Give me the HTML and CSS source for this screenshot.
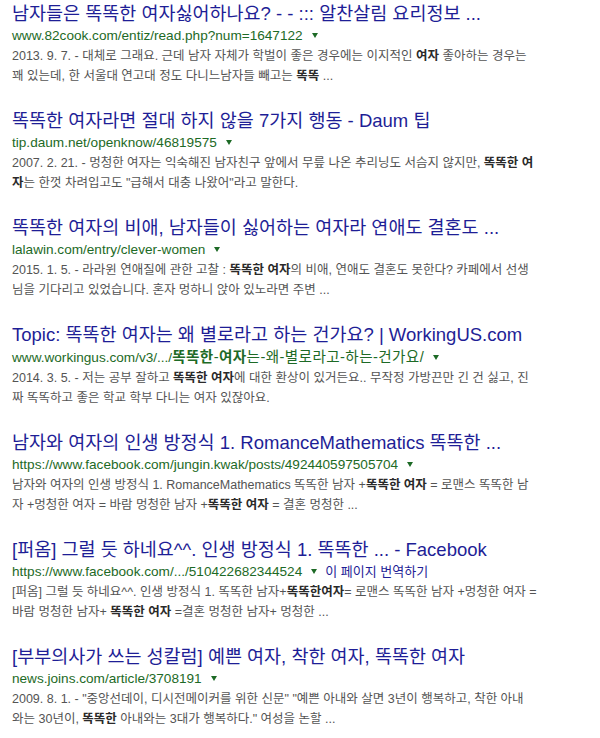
FILE: index.html
```html
<!DOCTYPE html>
<html lang="ko">
<head>
<meta charset="utf-8">
<link rel="stylesheet" href="styles.css">
</head>
<body>
<div class="results">
  <div class="result">
    <a class="title">남자들은 똑똑한 여자싫어하나요? - - ::: 알찬살림 요리정보 ...</a>
    <div class="url">www.82cook.com/entiz/read.php?num=1647122<span class="arrow"></span></div>
    <div class="snippet">2013. 9. 7. - 대체로 그래요. 근데 남자 자체가 학벌이 좋은 경우에는 이지적인 <b>여자</b> 좋아하는 경우는<br>꽤 있는데, 한 서울대 연고대 정도 다니느남자들 빼고는 <b>똑똑</b> ...</div>
  </div>
  <div class="result">
    <a class="title">똑똑한 여자라면 절대 하지 않을 7가지 행동 - Daum 팁</a>
    <div class="url">tip.daum.net/openknow/46819575<span class="arrow"></span></div>
    <div class="snippet">2007. 2. 21. - 멍청한 여자는 익숙해진 남자친구 앞에서 무릎 나온 추리닝도 서슴지 않지만, <b>똑똑한 여</b><br><b>자</b>는 한껏 차려입고도 "급해서 대충 나왔어"라고 말한다.</div>
  </div>
  <div class="result">
    <a class="title">똑똑한 여자의 비애, 남자들이 싫어하는 여자라 연애도 결혼도 ...</a>
    <div class="url">lalawin.com/entry/clever-women<span class="arrow"></span></div>
    <div class="snippet">2015. 1. 5. - 라라윈 연애질에 관한 고찰 : <b>똑똑한 여자</b>의 비애, 연애도 결혼도 못한다? 카페에서 선생<br>님을 기다리고 있었습니다. 혼자 멍하니 앉아 있노라면 주변 ...</div>
  </div>
  <div class="result">
    <a class="title">Topic: 똑똑한 여자는 왜 별로라고 하는 건가요? | WorkingUS.com</a>
    <div class="url">www.workingus.com/v3/.../<span class="ko"><b>똑똑한</b>-<b>여자</b>는-왜-별로라고-하는-건가요/</span><span class="arrow"></span></div>
    <div class="snippet">2014. 3. 5. - 저는 공부 잘하고 <b>똑똑한 여자</b>에 대한 환상이 있거든요.. 무작정 가방끈만 긴 건 싫고, 진<br>짜 똑똑하고 좋은 학교 학부 다니는 여자 있잖아요.</div>
  </div>
  <div class="result">
    <a class="title">남자와 여자의 인생 방정식 1. RomanceMathematics 똑똑한 ...</a>
    <div class="url">https://www.facebook.com/jungin.kwak/posts/492440597505704<span class="arrow"></span></div>
    <div class="snippet">남자와 여자의 인생 방정식 1. RomanceMathematics 똑똑한 남자 +<b>똑똑한 여자</b> = 로맨스 똑똑한 남<br>자 +멍청한 여자 = 바람 멍청한 남자 +<b>똑똑한 여자</b> = 결혼 멍청한 ...</div>
  </div>
  <div class="result">
    <a class="title">[퍼옴] 그럴 듯 하네요^^. 인생 방정식 1. 똑똑한 ... - Facebook</a>
    <div class="url">https://www.facebook.com/.../510422682344524<span class="arrow"></span><a class="translate">이 페이지 번역하기</a></div>
    <div class="snippet">[퍼옴] 그럴 듯 하네요^^. 인생 방정식 1. 똑똑한 남자+<b>똑똑한여자</b>= 로맨스 똑똑한 남자 +멍청한 여자 =<br>바람 멍청한 남자+ <b>똑똑한 여자</b> =결혼 멍청한 남자+ 멍청한 ...</div>
  </div>
  <div class="result">
    <a class="title">[부부의사가 쓰는 성칼럼] 예쁜 여자, 착한 여자, 똑똑한 여자</a>
    <div class="url">news.joins.com/article/3708191<span class="arrow"></span></div>
    <div class="snippet">2009. 8. 1. - "중앙선데이, 디시전메이커를 위한 신문" "예쁜 아내와 살면 3년이 행복하고, 착한 아내<br>와는 30년이, <b>똑똑한</b> 아내와는 3대가 행복하다." 여성을 논할 ...</div>
  </div>
</div>
</body>
</html>
```

FILE: styles.css
```css
html, body {
  margin: 0;
  padding: 0;
  background: #ffffff;
}

body {
  font-family: "Liberation Sans", "Noto Sans CJK KR", sans-serif;
  width: 600px;
  height: 738px;
  overflow: hidden;
}

.results {
  display: flex;
  flex-direction: column;
  gap: 23px;
  padding: 2px 0 0 12px;
}

.result {
  display: flex;
  flex-direction: column;
}

.title {
  display: block;
  font-size: 18.5px;
  line-height: 24px;
  color: #1e1e96;
  white-space: nowrap;
  text-decoration: none;
}

.url {
  font-size: 13.6px;
  line-height: 20px;
  color: #1d6a26;
  white-space: nowrap;
}

.url .ko {
  font-size: 14.6px;
  letter-spacing: 0.4px;
}

.url b {
  font-weight: 700;
  color: #1d6a26;
}

.arrow {
  display: inline-block;
  width: 0;
  height: 0;
  margin: 0 6px 2px 9px;
  border-left: 3.5px solid transparent;
  border-right: 3.5px solid transparent;
  border-top: 5px solid #1d6a26;
  vertical-align: middle;
}

.translate {
  color: #1e1e96;
  font-size: 13px;
  text-decoration: none;
  margin-left: 2px;
}

.snippet {
  font-size: 12.5px;
  line-height: 20px;
  color: #545454;
  white-space: nowrap;
}

.snippet b {
  color: #2a2a2a;
  font-weight: 700;
}
```
